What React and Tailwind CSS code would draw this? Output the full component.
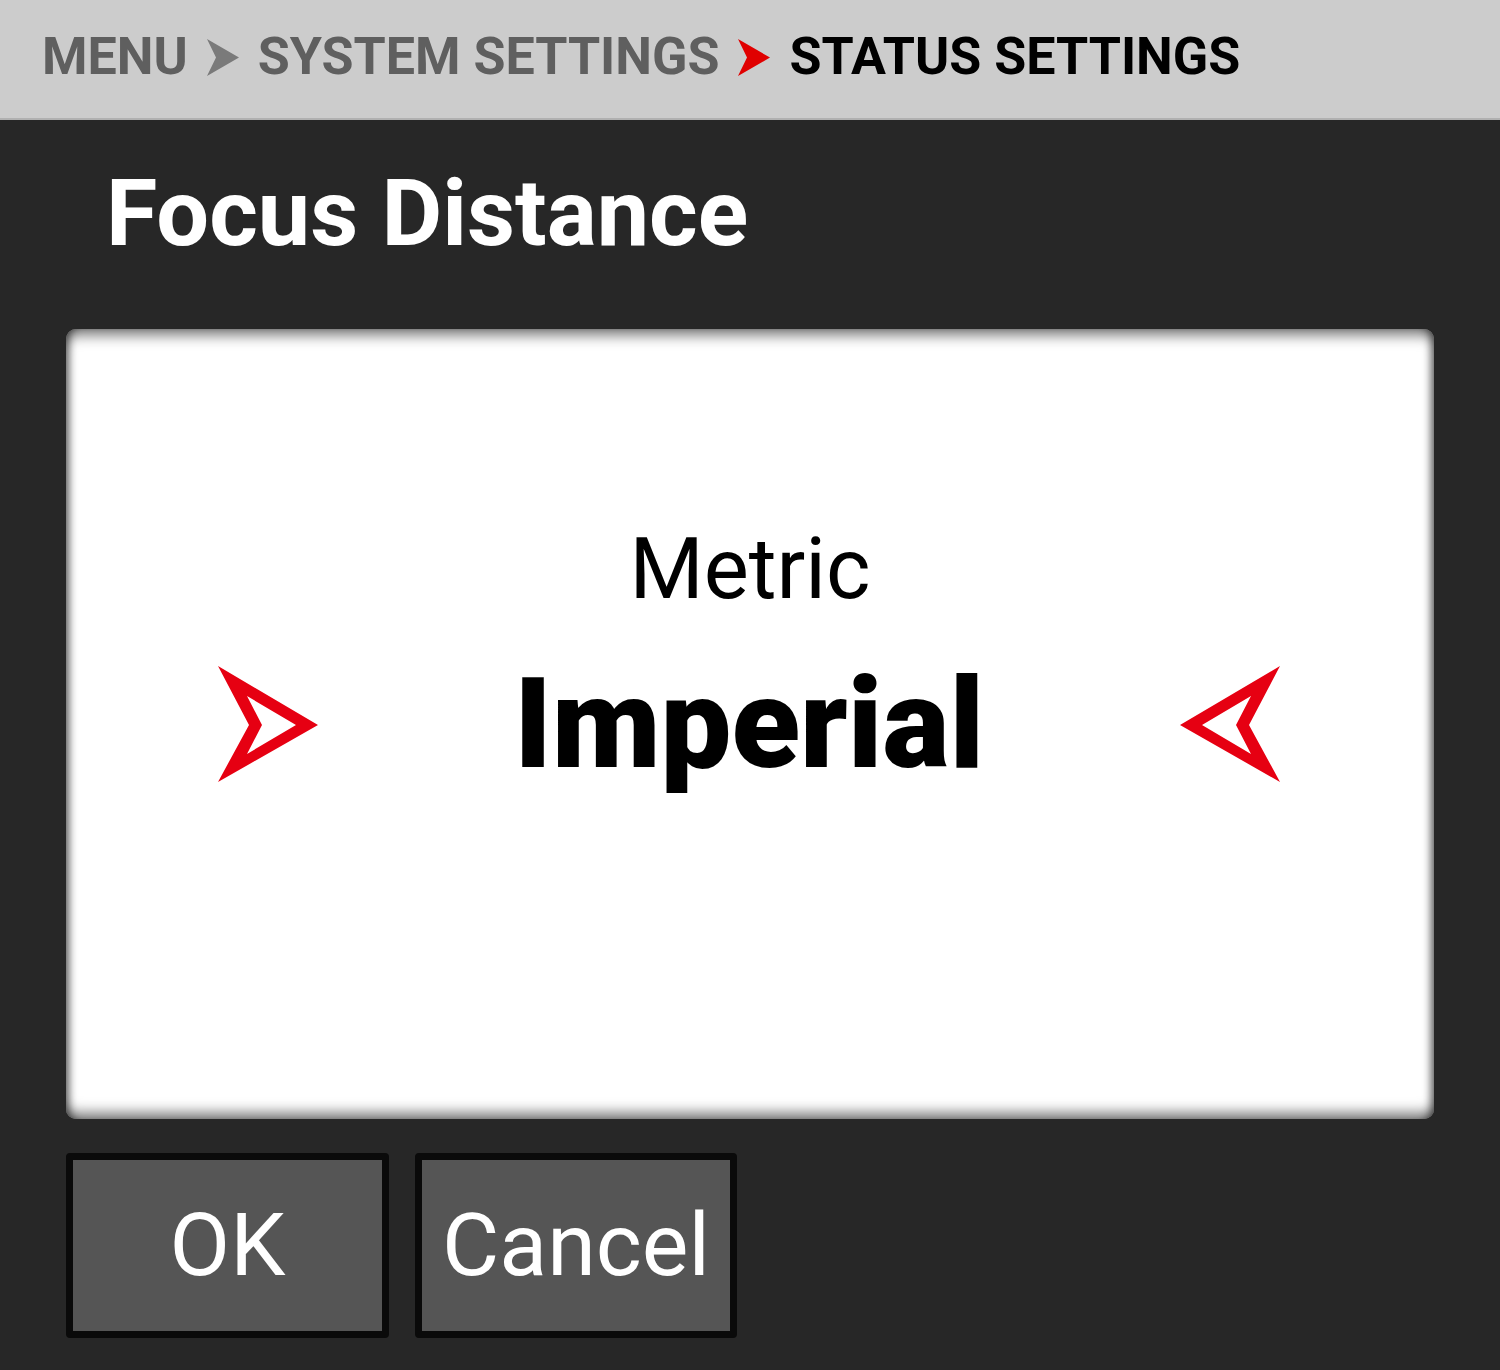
import React from 'react';

const font = { fontFamily: 'Roboto, "Liberation Sans", sans-serif' };

function Crumb({ red }) {
  return (
    <svg width="32" height="37" viewBox="0 0 32 37" className="shrink-0">
      <path d="M0 0 L32 18.5 L0 37 L9 18.5 Z" fill={red ? '#e00000' : '#7a7a7a'} />
    </svg>
  );
}

function Pointer({ flip }) {
  return (
    <svg
      width="100"
      height="116"
      viewBox="0 0 100 116"
      className={flip ? 'shrink-0 -scale-x-100' : 'shrink-0'}
    >
      <path
        fillRule="evenodd"
        fill="#e60012"
        d="M0 0 L100 59 L0 116 L31 59 Z M29 30 L44 59 L29 88 L78 59 Z"
      />
    </svg>
  );
}

export default function App() {
  return (
    <div className="w-[1500px] h-[1370px] bg-[#272727] flex flex-col" style={font}>
      {/* Breadcrumb bar */}
      <div className="h-[120px] bg-[#cccccc] border-b-2 border-[#b0b0b0] flex items-center pl-[42px] pb-[4px] gap-[19px] text-[52px] font-bold leading-none">
        <span className="text-[#5f5f5f]">MENU</span>
        <Crumb />
        <span className="text-[#5f5f5f]">SYSTEM SETTINGS</span>
        <Crumb red />
        <span className="text-black">STATUS SETTINGS</span>
      </div>

      {/* Title */}
      <h1 className="pl-[106px] pt-[47px] text-[93.5px] font-bold leading-none text-white">Focus Distance</h1>

      {/* Selector panel */}
      <div className="mx-[66px] mt-[68px] h-[790px] bg-white rounded-[10px] shadow-[inset_0_12px_14px_-6px_rgba(0,0,0,0.55),inset_0_-12px_14px_-6px_rgba(0,0,0,0.55),inset_9px_0_9px_-6px_rgba(0,0,0,0.5),inset_-9px_0_9px_-6px_rgba(0,0,0,0.5)] flex flex-col items-center pt-[198px]">
        <div className="text-[85px] leading-none text-black">Metric</div>
        <div className="mt-[49px] w-full flex items-center justify-between pl-[152px] pr-[154px]">
          <Pointer />
          <span className="text-[126px] font-black leading-none text-black">Imperial</span>
          <Pointer flip />
        </div>
      </div>

      {/* Buttons */}
      <div className="mt-[34px] pl-[66px] flex gap-[26px]">
        <button className="w-[323px] h-[185px] border-[7px] border-[#0a0a0a] rounded-[4px] bg-[#555555] text-white text-[88px] leading-none">
          OK
        </button>
        <button className="w-[322px] h-[185px] border-[7px] border-[#0a0a0a] rounded-[4px] bg-[#555555] text-white text-[88px] leading-none">
          Cancel
        </button>
      </div>
    </div>
  );
}
